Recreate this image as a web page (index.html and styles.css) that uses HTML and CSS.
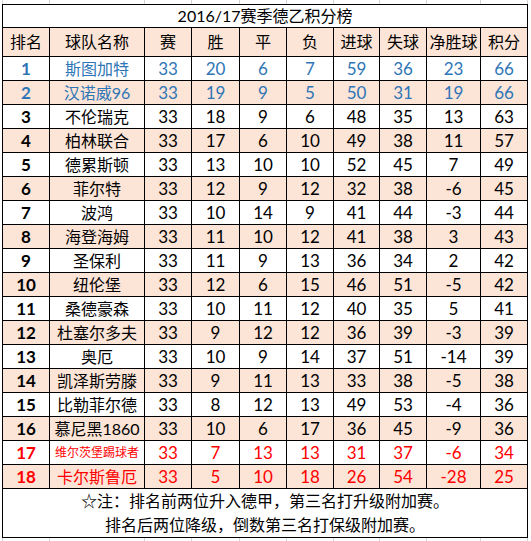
FILE: index.html
```html
<!DOCTYPE html>
<html lang="zh-CN">
<head>
<meta charset="utf-8">
<title>2016/17赛季德乙积分榜</title>
<link rel="stylesheet" href="styles.css">
</head>
<body>
<div class="sheet">
  <div class="strip strip-top">
    <span class="c1"></span><span class="c2"></span><span class="c3"></span><span class="c4"></span><span class="c5"></span><span class="c6"></span><span class="c7"></span><span class="c8"></span><span class="c9"></span><span class="c10"></span>
  </div>
  <table class="standings">
    <colgroup>
      <col class="w-rank"><col class="w-team"><col class="w-n"><col class="w-n2"><col class="w-n"><col class="w-n"><col class="w-n3"><col class="w-n"><col class="w-gd"><col class="w-n">
    </colgroup>
    <tr class="title"><td colspan="10">2016/17赛季德乙积分榜</td></tr>
    <tr class="head">
      <td>排名</td><td>球队名称</td><td>赛</td><td>胜</td><td>平</td><td>负</td><td>进球</td><td>失球</td><td>净胜球</td><td>积分</td>
    </tr>
    <tr class="row up"><td class="rank">1</td><td class="team">斯图加特</td><td>33</td><td>20</td><td>6</td><td>7</td><td>59</td><td>36</td><td>23</td><td>66</td></tr>
    <tr class="row alt up"><td class="rank">2</td><td class="team">汉诺威96</td><td>33</td><td>19</td><td>9</td><td>5</td><td>50</td><td>31</td><td>19</td><td>66</td></tr>
    <tr class="row"><td class="rank">3</td><td class="team">不伦瑞克</td><td>33</td><td>18</td><td>9</td><td>6</td><td>48</td><td>35</td><td>13</td><td>63</td></tr>
    <tr class="row alt"><td class="rank">4</td><td class="team">柏林联合</td><td>33</td><td>17</td><td>6</td><td>10</td><td>49</td><td>38</td><td>11</td><td>57</td></tr>
    <tr class="row"><td class="rank">5</td><td class="team">德累斯顿</td><td>33</td><td>13</td><td>10</td><td>10</td><td>52</td><td>45</td><td>7</td><td>49</td></tr>
    <tr class="row alt"><td class="rank">6</td><td class="team">菲尔特</td><td>33</td><td>12</td><td>9</td><td>12</td><td>32</td><td>38</td><td>-6</td><td>45</td></tr>
    <tr class="row"><td class="rank">7</td><td class="team">波鸿</td><td>33</td><td>10</td><td>14</td><td>9</td><td>41</td><td>44</td><td>-3</td><td>44</td></tr>
    <tr class="row alt"><td class="rank">8</td><td class="team">海登海姆</td><td>33</td><td>11</td><td>10</td><td>12</td><td>41</td><td>38</td><td>3</td><td>43</td></tr>
    <tr class="row"><td class="rank">9</td><td class="team">圣保利</td><td>33</td><td>11</td><td>9</td><td>13</td><td>36</td><td>34</td><td>2</td><td>42</td></tr>
    <tr class="row alt"><td class="rank">10</td><td class="team">纽伦堡</td><td>33</td><td>12</td><td>6</td><td>15</td><td>46</td><td>51</td><td>-5</td><td>42</td></tr>
    <tr class="row"><td class="rank">11</td><td class="team">桑德豪森</td><td>33</td><td>10</td><td>11</td><td>12</td><td>40</td><td>35</td><td>5</td><td>41</td></tr>
    <tr class="row alt"><td class="rank">12</td><td class="team">杜塞尔多夫</td><td>33</td><td>9</td><td>12</td><td>12</td><td>36</td><td>39</td><td>-3</td><td>39</td></tr>
    <tr class="row"><td class="rank">13</td><td class="team">奥厄</td><td>33</td><td>10</td><td>9</td><td>14</td><td>37</td><td>51</td><td>-14</td><td>39</td></tr>
    <tr class="row alt"><td class="rank">14</td><td class="team">凯泽斯劳滕</td><td>33</td><td>9</td><td>11</td><td>13</td><td>33</td><td>38</td><td>-5</td><td>38</td></tr>
    <tr class="row"><td class="rank">15</td><td class="team">比勒菲尔德</td><td>33</td><td>8</td><td>12</td><td>13</td><td>49</td><td>53</td><td>-4</td><td>36</td></tr>
    <tr class="row alt"><td class="rank">16</td><td class="team">慕尼黑1860</td><td>33</td><td>10</td><td>6</td><td>17</td><td>36</td><td>45</td><td>-9</td><td>36</td></tr>
    <tr class="row down"><td class="rank">17</td><td class="team small">维尔茨堡踢球者</td><td>33</td><td>7</td><td>13</td><td>13</td><td>31</td><td>37</td><td>-6</td><td>34</td></tr>
    <tr class="row alt down"><td class="rank">18</td><td class="team">卡尔斯鲁厄</td><td>33</td><td>5</td><td>10</td><td>18</td><td>26</td><td>54</td><td>-28</td><td>25</td></tr>
    <tr class="note"><td colspan="10">
      <p>☆注：排名前两位升入德甲，第三名打升级附加赛。</p>
      <p>排名后两位降级，倒数第三名打保级附加赛。</p>
    </td></tr>
  </table>
  <div class="strip strip-bottom">
    <span class="c1"></span><span class="c2"></span><span class="c3"></span><span class="c4"></span><span class="c5"></span><span class="c6"></span><span class="c7"></span><span class="c8"></span><span class="c9"></span><span class="c10"></span>
  </div>
</div>
</body>
</html>
```
FILE: styles.css
```css
html, body {
  margin: 0;
  padding: 0;
  background: #ffffff;
}

.sheet {
  width: 531px;
  height: 541px;
  overflow: hidden;
  font-family: "Lato", "Noto Sans CJK SC", sans-serif;
  color: #000;
}

.strip {
  display: flex;
  height: 4px;
  margin-left: 2px;
}
.strip-bottom {
  height: 5px;
}
.strip span {
  display: block;
  box-sizing: border-box;
  border-left: 1px solid #d4d4d4;
  height: 100%;
}
.strip .c10 { border-right: 1px solid #d4d4d4; }
.c1 { width: 47px; }
.c2 { width: 95px; }
.c3 { width: 47px; }
.c4 { width: 48px; }
.c5 { width: 47px; }
.c6 { width: 47px; }
.c7 { width: 46px; }
.c8 { width: 47px; }
.c9 { width: 54px; }
.c10 { width: 48px; }

.standings {
  margin-left: 2px;
  border-collapse: collapse;
  table-layout: fixed;
  width: 526px;
}
.w-rank { width: 47px; }
.w-team { width: 95px; }
.w-n { width: 47px; }
.w-n2 { width: 48px; }
.w-n3 { width: 46px; }
.w-gd { width: 54px; }

.standings td {
  border: 1px solid #000;
  padding: 0;
  text-align: center;
  vertical-align: middle;
  font-size: 17px;
  line-height: 1;
  white-space: nowrap;
  overflow: hidden;
}

.title td {
  height: 22px;
  font-size: 16px;
}

.head td {
  height: 28px;
  font-size: 16px;
  background: #fce4d6;
}

.row td {
  height: 23px;
}
.row.alt td {
  background: #fce4d6;
}
.row .rank {
  font-weight: 700;
}
.row .team {
  font-size: 16px;
}
.row .team.small {
  font-size: 12px;
}
.row.up td {
  color: #2e75b6;
}
.row.down td {
  color: #ff0000;
}

.note td {
  height: 47px;
  font-size: 16px;
}
.note p {
  margin: 0;
  line-height: 24px;
}
```
